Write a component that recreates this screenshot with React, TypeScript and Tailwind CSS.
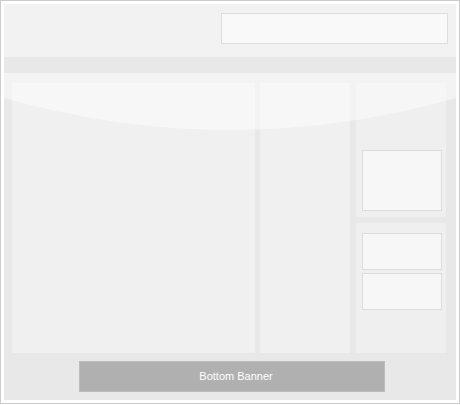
import React from 'react';

const Box: React.FC<{ className?: string }> = ({ className = '' }) => (
  <div className={`w-[80px] border border-[#dcdcdc] bg-[#f7f7f7] ${className}`} />
);

const App: React.FC = () => {
  return (
    <div className="w-[460px] h-[404px] border border-[#cccccc] bg-white p-[3px] font-['Liberation_Sans',Arial,sans-serif]">
      <div className="flex h-full flex-col">
        {/* header */}
        <div className="flex h-[53px] justify-end bg-[#f2f2f2] pt-[9px] pr-[8px]">
          <div className="h-[31px] w-[227px] border border-[#dddddd] bg-[#f9f9f9]" />
        </div>

        {/* nav */}
        <div className="h-[16px] bg-[#e8e8e8]" />

        {/* main */}
        <div className="relative flex flex-1 flex-col bg-[#e8e8e8]">
          <div className="flex h-[280px] gap-[5px] pt-[10px] pl-[8px] pr-[9px]">
            <div className="w-[243px] bg-[#f0f0f0]" />
            <div className="w-[90px] bg-[#f0f0f0]" />
            <div className="ml-[1px] flex w-[90px] flex-col gap-[6px]">
              <div className="flex h-[134px] flex-col justify-end bg-[#efefef] pb-[6px] pl-[6px]">
                <Box className="h-[61px]" />
              </div>
              <div className="flex flex-1 flex-col gap-[3px] bg-[#efefef] pt-[10px] pl-[6px]">
                <Box className="h-[37px]" />
                <Box className="h-[37px]" />
              </div>
            </div>
          </div>

          <div className="flex pt-[8px] pl-[75px]">
            <div className="flex h-[31px] w-[306px] items-center justify-center border border-[#bcbcbc] bg-[#b0b0b0] pl-[8px] text-[11px] text-white">
              Bottom Banner
            </div>
          </div>

          {/* gloss */}
          <svg
            className="pointer-events-none absolute left-0 top-0"
            width="452"
            height="60"
            viewBox="0 0 452 60"
          >
            <path d="M0,0 L0,25 Q226,89 452,25 L452,0 Z" fill="white" fillOpacity="0.47" />
          </svg>
        </div>
      </div>
    </div>
  );
};

export default App;
